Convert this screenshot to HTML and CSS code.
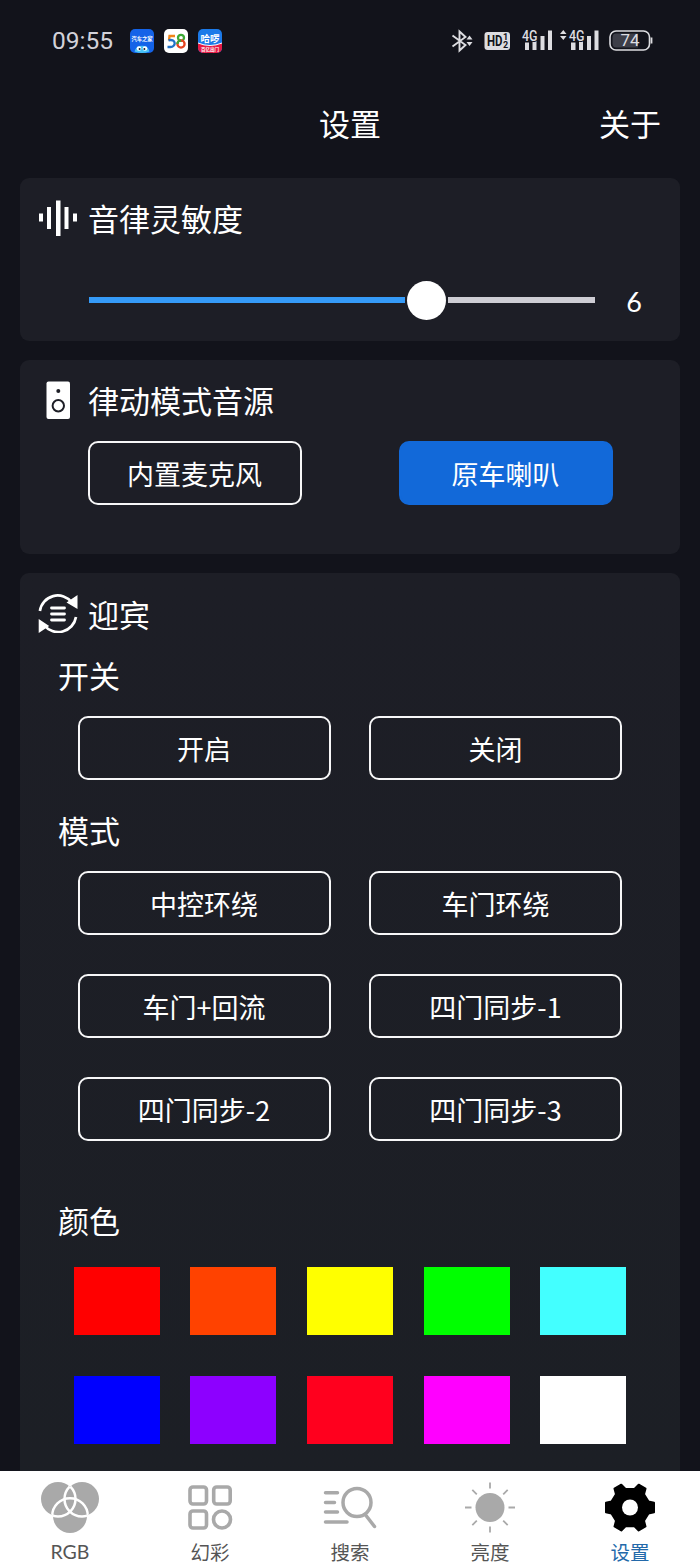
FILE: index.html
```html
<!DOCTYPE html>
<html lang="zh-CN">
<head>
<meta charset="utf-8">
<title>设置</title>
<link rel="stylesheet" href="styles.css">
</head>
<body>
<div class="screen">
  <header class="status">
    <span class="clock">09:55</span>
    <svg class="apps" width="92" height="24" viewBox="0 0 92 24">
      <rect x="0" y="0" width="24" height="24" rx="5" fill="#1463e8"/>
      <text x="12" y="12" class="app-auto">汽车之家</text>
      <path d="M4.500 22.500a7.800 8 0 0 1 15 0q-7.500 3-15 0z" fill="#48c3f7"/>
      <circle cx="9" cy="19.500" r="2.300" fill="#fff"/><circle cx="15" cy="19.500" r="2.300" fill="#fff"/>
      <circle cx="9.600" cy="20" r="1" fill="#123"/><circle cx="14.400" cy="20" r="1" fill="#123"/>
      <rect x="34" y="0" width="24" height="24" rx="5" fill="#fff"/>
      <g fill="none" stroke-width="2.300">
        <path d="M45 7h-5.500l-.5 4.500" stroke="#f08519"/>
        <path d="M38.500 11.300c8-2 8 7 1.500 6.700h-2.500" stroke="#2172c7"/>
        <circle cx="51" cy="8.800" r="3" stroke="#3da936"/>
        <circle cx="51" cy="15" r="3.600" stroke="#e54420"/>
        <path d="M47.400 15a3.600 3.600 0 0 1 3.600-3.600" stroke="#3da936"/>
      </g>
      <rect x="68" y="0" width="24" height="24" rx="5" fill="#1c7ae9"/>
      <path d="M68 14q12 5 24 0v5a5 5 0 0 1-5 5H73a5 5 0 0 1-5-5z" fill="#e71a45"/>
      <path d="M68 14q12 5 24 0" fill="none" stroke="#fff" stroke-width="1"/>
      <text x="80" y="12.500" class="app-hello">哈啰</text>
      <text x="80" y="22" class="app-sub">百亿出门</text>
    </svg>
    <svg class="signals" width="204" height="28" viewBox="0 0 204 28">
      <path d="M2.500 8.500l13 9.500-6 5.500v-19l6 5.500-13 9.500" fill="none" stroke="#dddde1" stroke-width="1.900"/>
      <path d="M16.500 12.500h6l-3-4zM16.500 15h6l-3 4z" fill="#dddde1"/>
      <rect x="34.500" y="5" width="25.500" height="18" rx="3" fill="#dddde1"/>
      <text x="37" y="19" class="hd" textLength="15.500" lengthAdjust="spacingAndGlyphs">HD</text>
      <text x="53" y="13" class="hd-small">1</text><text x="53" y="21.300" class="hd-small">2</text>
      <g fill="#dddde1">
        <path d="M75 15.500h4V23h-4zM82.500 13.500h4V23h-4zM90.500 9h4v14h-4zM98 3.500h4V23h-4z"/>
        <path d="M121 15.500h4.500V23H121zM129 13.500h4V23h-4zM137 9h4v14h-4zM144.500 3.500h4V23h-4z"/>
        <path d="M110 7h6.500l-3.200-4zM110 9h6.500l-3.200 4z"/>
      </g>
      <text x="72" y="13.500" class="net" textLength="15.500" lengthAdjust="spacingAndGlyphs">4G</text>
      <text x="119" y="13.500" class="net" textLength="15.500" lengthAdjust="spacingAndGlyphs">4G</text>
      <rect x="160" y="4" width="39.500" height="19" rx="6" fill="none" stroke="#dddde1" stroke-width="1.600"/>
      <path d="M166 6.500h22v14h-22q-3.500 0-3.500-4v-6q0-4 3.500-4z" fill="#3d3e48"/>
      <path d="M201.500 10.500v6" stroke="#dddde1" stroke-width="1.800"/>
      <text x="180" y="19.300" class="battery">74</text>
    </svg>
  </header>

  <nav class="titlebar"><span></span><h1>设置</h1><a class="about">关于</a></nav>

  <main class="content">
    <section class="card card-sensitivity">
      <h2 class="heading">
        <svg width="40" height="40" viewBox="0 0 40 40" fill="#fff"><path d="M1 16.500h4v8H1zM9 10h4v22H9zM18 3.500h4.500V39H18zM26.500 10h4v22h-4zM35 16.500h4v8h-4z"/></svg>
        <span>音律灵敏度</span>
      </h2>
      <div class="slider-row">
        <div class="slider"><div class="filled"></div><div class="knob"></div><div class="rest"></div></div>
        <span class="value">6</span>
      </div>
    </section>

    <section class="card card-source">
      <h2 class="heading">
        <svg width="40" height="40" viewBox="0 0 40 40"><rect x="8.500" y="2.500" width="23.500" height="37.500" rx="2" fill="#fff"/><circle cx="20.300" cy="12" r="2" fill="#1d1e26"/><circle cx="20.300" cy="26.700" r="5.700" fill="none" stroke="#1d1e26" stroke-width="2"/></svg>
        <span>律动模式音源</span>
      </h2>
      <div class="source-buttons"><button class="btn">内置麦克风</button><button class="btn selected">原车喇叭</button></div>
    </section>

    <section class="card card-welcome">
      <h2 class="heading">
        <svg width="40" height="40" viewBox="0 0 40 40"><g fill="none" stroke="#fff"><path d="M1.900 18A18 18 0 0 1 34 9.500M38 24A18 18 0 0 1 6 32" stroke-width="2.700"/><path d="M13.500 15h13M13.500 21h13M13.500 27h13" stroke-width="2.800" stroke-linecap="round"/></g><path d="M39.500 2v14L28.500 9.500zM.7 40V26l10.500 7z" fill="#fff"/></svg>
        <span>迎宾</span>
      </h2>
      <h3 class="label">开关</h3>
      <div class="options"><button class="btn">开启</button><button class="btn">关闭</button></div>
      <h3 class="label">模式</h3>
      <div class="options">
        <button class="btn">中控环绕</button><button class="btn">车门环绕</button>
        <button class="btn">车门+回流</button><button class="btn">四门同步-1</button>
        <button class="btn">四门同步-2</button><button class="btn">四门同步-3</button>
      </div>
      <h3 class="label label-color">颜色</h3>
      <div class="swatches">
        <i class="red"></i><i class="orange"></i><i class="yellow"></i><i class="green"></i><i class="cyan"></i>
        <i class="blue"></i><i class="purple"></i><i class="crimson"></i><i class="magenta"></i><i class="white"></i>
      </div>
    </section>
  </main>

  <footer class="tabs">
    <a class="tab">
      <svg width="60" height="54" viewBox="0 0 60 54">
        <defs>
          <clipPath id="over-left"><circle cx="42" cy="18" r="17"/><circle cx="30" cy="35" r="17"/></clipPath>
          <clipPath id="over-right"><circle cx="18" cy="18" r="17"/><circle cx="30" cy="35" r="17"/></clipPath>
          <clipPath id="over-bottom"><circle cx="18" cy="18" r="17"/><circle cx="42" cy="18" r="17"/></clipPath>
        </defs>
        <g fill="#a9a9a9"><circle cx="18" cy="18" r="17"/><circle cx="42" cy="18" r="17"/><circle cx="30" cy="35" r="17"/></g>
        <g fill="none" stroke="#fff" stroke-width="2.500">
          <g clip-path="url(#over-left)"><circle cx="18" cy="18" r="17.500"/></g>
          <g clip-path="url(#over-right)"><circle cx="42" cy="18" r="17.500"/></g>
          <g clip-path="url(#over-bottom)"><circle cx="30" cy="35" r="17.800"/></g>
        </g>
      </svg>
      <span class="latin">RGB</span>
    </a>
    <a class="tab">
      <svg width="60" height="54" viewBox="0 0 60 54" fill="none" stroke="#a9a9a9" stroke-width="3.600"><rect x="10" y="6" width="16.500" height="17" rx="3"/><rect x="33.700" y="6" width="16.500" height="17" rx="3"/><rect x="10" y="30" width="16.500" height="17" rx="3"/><circle cx="42" cy="38.500" r="8.500"/></svg>
      <span>幻彩</span>
    </a>
    <a class="tab">
      <svg width="60" height="54" viewBox="0 0 60 54" fill="none" stroke="#a9a9a9" stroke-width="3.500" stroke-linecap="round"><path d="M5.500 11.700h12M5.500 21.500h9M5.500 31h12M5.500 41h21.500M46 34.500l8.500 11"/><circle cx="37" cy="21.500" r="14"/></svg>
      <span>搜索</span>
    </a>
    <a class="tab">
      <svg width="60" height="54" viewBox="0 0 60 54"><circle cx="30" cy="26.500" r="14.500" fill="#a9a9a9"/><path d="M30 1.500v6M30 45.500v6M5 26.500h6.500M48.500 26.500H55M12.300 8.800l4.500 4.500M43.200 39.700l4.500 4.500M12.300 44.200l4.500-4.500M43.200 13.300l4.500-4.500" stroke="#a9a9a9" stroke-width="1.800"/></svg>
      <span>亮度</span>
    </a>
    <a class="tab active">
      <svg width="60" height="54" viewBox="0 0 60 54"><path stroke="#000" stroke-width="2" stroke-linejoin="round" d="M21.300 3.700L25.500 8h9l4.200-4.300 6.800 4L44 13.300l4.500 7.200 5.500 1.200v9.500l-5.500 1.300-4.500 7.200 1.500 5.800-6.800 4-4.200-4.300h-9l-4.200 4.300-6.800-4L16 39.700l-4.500-7.200L6 31.200v-9.500l5.500-1.200 4.500-7.200-1.500-5.600z"/><circle cx="30" cy="26.500" r="8" fill="#fff"/></svg>
      <span>设置</span>
    </a>
  </footer>
</div>
</body>
</html>
```

FILE: styles.css
```css
* { box-sizing: border-box; }
body { margin: 0; background: #12131b; }
h1, h2, h3 { margin: 0; font-weight: 400; }
svg { display: block; flex: none; }
.screen {
  width: 700px;
  height: 1563px;
  overflow: hidden;
  display: flex;
  flex-direction: column;
  color: #fff;
  background: #12131b;
  font-family: "Noto Sans CJK SC", sans-serif;
}
.status { height: 82px; flex: none; display: flex; align-items: center; padding: 0 46px 0 52px; }
.clock { width: 78px; font: 24.500px/30px Roboto, sans-serif; color: #d2d2d9; }
.signals { margin-left: auto; }
.apps text { text-anchor: middle; fill: #fff; font-weight: 700; }
.app-auto { font-size: 5.300px; }
.app-hello { font-size: 9.500px; }
.app-sub { font-size: 4.500px; }
.hd { font: 700 14px Roboto, sans-serif; fill: #12131b; }
.hd-small { font: 700 9px Roboto, sans-serif; fill: #12131b; }
.net { font: 500 15px Roboto, sans-serif; fill: #dddde1; stroke: #12131b; stroke-width: 2px; paint-order: stroke; }
.battery { font: 17px Roboto, sans-serif; fill: #dddde1; text-anchor: middle; }
.titlebar { height: 84px; flex: none; display: grid; grid-template-columns: 1fr auto 1fr; align-items: center; padding: 0 39px 2px; }
.titlebar h1, .about { font-size: 31px; line-height: 40px; }
.about { text-align: right; }
.content { flex: 1; min-height: 0; overflow: hidden; padding: 12px 20px 0; }
.card { background: #1d1e26; border-radius: 9px; margin-bottom: 19px; }
.card-sensitivity { height: 163px; padding: 19px 18px 0; }
.card-source { height: 194px; padding: 19px 18px 0; }
.card-welcome { height: 920px; padding: 20px 18px 0; background: linear-gradient(#1d1e26, #1c1f25); }
.heading { height: 42px; display: flex; align-items: flex-start; gap: 10px; font-size: 31px; line-height: 42px; }
.slider-row { display: flex; align-items: center; height: 40px; margin-top: 41px; padding-left: 51px; }
.slider { display: flex; flex: none; align-items: center; width: 506px; gap: 2px; }
.filled { width: 316px; height: 6px; background: #359af7; }
.knob { width: 39px; height: 39px; border-radius: 50%; background: #fff; }
.rest { flex: 1; height: 6px; background: #cecdd4; }
.value { flex: none; width: 78px; text-align: center; font: 27px/40px Lato, sans-serif; padding-top: 3px; }
.btn {
  height: 64px;
  padding: 1px 0 0;
  border: 2px solid #f7f7f8;
  border-radius: 10px;
  background: transparent;
  color: #fff;
  font: 27px/40px "Noto Sans CJK SC", sans-serif;
}
.source-buttons { display: grid; grid-template-columns: 214px 214px; gap: 97px; padding-left: 49.500px; margin-top: 20px; }
.selected { background: #1269d9; border-color: #1269d9; }
.label { height: 61px; padding-left: 20px; margin-top: 20px; font-size: 31px; line-height: 40px; }
.options { display: grid; grid-template-columns: 253px 253px; column-gap: 38.500px; row-gap: 39px; padding-left: 39.500px; }
.options + .label { height: 61px; margin-top: 30px; }
.options + .label-color { height: 67px; margin-top: 59px; }
.swatches { display: grid; grid-template-columns: repeat(5, 86px); grid-auto-rows: 68px; column-gap: 30.600px; row-gap: 41px; padding-left: 35.800px; }
.red { background: #f00; }
.orange { background: #ff4200; }
.yellow { background: #ff0; }
.green { background: #0f0; }
.cyan { background: #43ffff; }
.blue { background: #00f; }
.purple { background: #8d00ff; }
.crimson { background: #ff001e; }
.magenta { background: #f0f; }
.white { background: #fff; }
.tabs { height: 92px; flex: none; display: grid; grid-template-columns: repeat(5, 1fr); background: #fff; color: #555; }
.tab { display: flex; flex-direction: column; align-items: center; padding-top: 10px; font-size: 19.500px; line-height: 22px; gap: 6px; }
.latin { font-family: Lato, sans-serif; }
.active { color: #2369aa; }
```
